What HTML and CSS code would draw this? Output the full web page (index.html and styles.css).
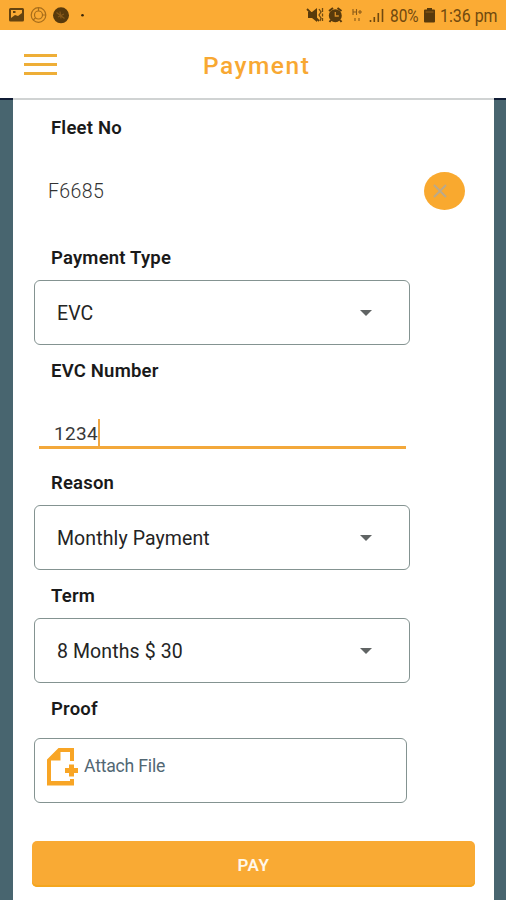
FILE: index.html
```html
<!DOCTYPE html>
<html lang="en">
<head>
<meta charset="utf-8">
<title>Payment</title>
<link rel="stylesheet" href="styles.css">
</head>
<body>
<div class="status">
  <svg class="notices" width="90" height="30" viewBox="0 0 90 30">
    <path fill="#65430f" fill-rule="evenodd" d="M10.500 8h12q1.500 0 1.500 1.500v10.500q0 1.500-1.500 1.500h-12q-1.500 0-1.500-1.500v-10.500q0-1.500 1.500-1.500zM11 10v8l4-3 3 1 4-3v-3zM13 11h2.500v2h-2.500z"/>
    <g fill="none" stroke="#a76d1a" stroke-width="1.200"><circle cx="38.500" cy="15" r="7.300"/><circle cx="38.500" cy="15" r="4"/><path d="M38.500 8v3M42.500 15h3.500M33 20l2.500-2"/></g>
    <circle cx="61" cy="15.300" r="8" fill="#583a0c"/>
    <path d="M56.500 12.500l8 6M60 11.500l1 7M64 14l-6 3" stroke="#85581a" stroke-width="1.200"/>
    <circle cx="82.500" cy="15.300" r="1.300" fill="#38260b"/>
  </svg>
  <svg class="signals" width="80" height="30" viewBox="0 0 80 30">
    <path d="M2 12h4l5-4v14l-5-4H2z" fill="#583a0c"/>
    <path d="M1 9l12 12" stroke="#583a0c" stroke-width="1.800"/>
    <path d="M13 9l2 3-2 3 2 3-1 3M16.500 8v4M16.500 13.500v3M16.500 18v3" fill="none" stroke="#70490f" stroke-width="1.300"/>
    <circle cx="29.300" cy="15.700" r="6.500" fill="#583a0c"/>
    <path d="M23 11l4-3M31.500 8l4 3M25 20l-1.500 2M34 20l1.500 2" stroke="#583a0c" stroke-width="2"/>
    <path d="M29.300 12v4h3.500" fill="none" stroke="#d98f27" stroke-width="1.300"/>
    <path d="M47 9v6M50.500 9v6M47 12h3.500M52 12h4M54 10v4M49 18v3M53 18v3" stroke="#8a5a17" stroke-width="1.100"/>
    <path d="M64.500 20v2M68.300 17v5M72.300 13v9M76.500 9v13" stroke="#70490f" stroke-width="1.600"/>
  </svg>
  <span class="percent">80%</span>
  <svg class="battery" width="11" height="30" viewBox="0 0 11 30"><path d="M3 8h5v1.500h2q1 0 1 1v11q0 1-1 1H1q-1 0-1-1v-11q0-1 1-1h2z" fill="#583a0c"/><path d="M1.500 12h8" stroke="#956119"/></svg>
  <span class="clock">1:36 pm</span>
</div>
<header class="header">
  <div class="menu"><i></i><i></i><i></i></div>
  <h1>Payment</h1>
</header>
<main class="sheet">
  <h2>Fleet No</h2>
  <div class="fleet"><span>F6685</span><button class="clear"><svg width="14" height="14" viewBox="0 0 14 14"><path d="M1 1l12 12M13 1L1 13" stroke="#baa98b" stroke-width="2"/></svg></button></div>
  <h2>Payment Type</h2>
  <div class="select"><span>EVC</span><i class="arrow"></i></div>
  <h2>EVC Number</h2>
  <div class="input"><span>1234</span><i class="caret"></i></div>
  <h2>Reason</h2>
  <div class="select"><span>Monthly Payment</span><i class="arrow"></i></div>
  <h2>Term</h2>
  <div class="select"><span>8 Months $ 30</span><i class="arrow"></i></div>
  <h2>Proof</h2>
  <div class="attach">
    <svg width="32" height="38" viewBox="0 0 32 38"><path fill="#f8a525" fill-rule="evenodd" d="M0 11.500L11.500 0H27v13h-4V4H13.500v8.500H4V33h19v-2h4v6.500H0z"/><path d="M24.500 16.500v12M18 22.500h13" stroke="#f8a525" stroke-width="5"/></svg>
    <span>Attach File</span>
  </div>
  <button class="pay">PAY</button>
</main>
</body>
</html>
```
FILE: styles.css
```css
* { box-sizing: border-box; }
body {
  margin: 0;
  width: 506px;
  height: 900px;
  overflow: hidden;
  background: #48656f;
  font-family: Roboto, sans-serif;
  color: #242424;
}
svg { display: block; flex: none; }
button { border: 0; padding: 0; font-family: inherit; }
.status {
  display: flex;
  align-items: center;
  height: 30px;
  background: #fbab34;
  color: #70490f;
  font-size: 17.5px;
  line-height: 30px;
  white-space: nowrap;
}
.signals { margin-left: 216px; }
.percent, .clock { transform-origin: left center; padding-top: 2px; }
.percent { width: 29px; margin-left: 4px; transform: scaleX(.88); }
.battery { margin-left: 5px; }
.clock { margin-left: 5px; transform: scaleX(.91); }
.header {
  display: flex;
  align-items: center;
  height: 70px;
  padding-left: 24px;
  background: #fff;
  border-bottom: 2px solid #d0d3d3;
  border-image: linear-gradient(90deg, #101c35 13px, #d0d3d3 13px, #d0d3d3 494px, #101c35 494px) 0 0 2 0;
}
.menu { display: grid; gap: 6px; width: 33px; margin-top: 1px; }
.menu i { height: 3.300px; background: #eeae37; }
.header h1 {
  margin: 3px 0 0 146px;
  color: #f8a832;
  font-size: 24.5px;
  font-weight: 500;
  letter-spacing: 1.5px;
}
.sheet {
  width: 481px;
  height: 800px;
  margin-left: 13px;
  padding: 16px 19px 0 21px;
  background: #fff;
}
.sheet h2 {
  height: 24px;
  margin: 0 0 0 17px;
  font-size: 18.5px;
  line-height: 25px;
  font-weight: 600;
  letter-spacing: .2px;
  color: #1a1a1a;
}
.fleet {
  display: flex;
  align-items: center;
  justify-content: space-between;
  height: 38px;
  margin: 32px 10px 36px 14px;
  color: #333;
  font-size: 19.5px;
  font-weight: 300;
  letter-spacing: .4px;
}
.fleet span { padding-top: 1px; }
.clear {
  width: 41px;
  height: 38px;
  padding-left: 9px;
  border-radius: 50%;
  background: #f9a92f;
}
.select {
  display: flex;
  align-items: center;
  justify-content: space-between;
  width: 376px;
  height: 65px;
  margin: 10px 0 14px;
  padding: 2px 37px 0 22px;
  border: 1.500px solid #849391;
  border-radius: 6px;
  font-size: 19.5px;
  letter-spacing: .1px;
}
.arrow { border: 6px solid transparent; border-top-color: #606464; border-bottom: 0; margin-top: -2px; }
.input {
  display: flex;
  align-items: flex-end;
  width: 367px;
  height: 66px;
  margin: 0 0 22px 5px;
  padding-left: 15px;
  border-bottom: 3px solid #f3a83b;
  font-size: 19px;
  line-height: 25px;
  letter-spacing: .3px;
  color: #383838;
}
.caret { width: 2px; height: 27px; background: #f0a844; }
.attach {
  display: flex;
  width: 373px;
  height: 65px;
  margin-top: 18px;
  padding: 9px 0 0 12px;
  border: 1.500px solid #849391;
  border-radius: 6px;
  color: #526773;
  font-size: 17.6px;
  letter-spacing: -.2px;
}
.sheet h2:last-of-type { margin-bottom: -1px; }
.sheet .attach { margin-top: 0; transform: none; }
.sheet h2:last-of-type + .attach { margin-top: 18px; }
.attach span { margin: 8px 0 0 5px; }
.pay {
  display: block;
  width: 443px;
  height: 46px;
  margin: 38px 0 0 -2px;
  padding-top: 2px;
  border-radius: 5px;
  background: #f9aa34;
  box-shadow: inset 0 -2px #f4a61e;
  color: #fff7ea;
  font-size: 17px;
  font-weight: 600;
  letter-spacing: .6px;
}
```
